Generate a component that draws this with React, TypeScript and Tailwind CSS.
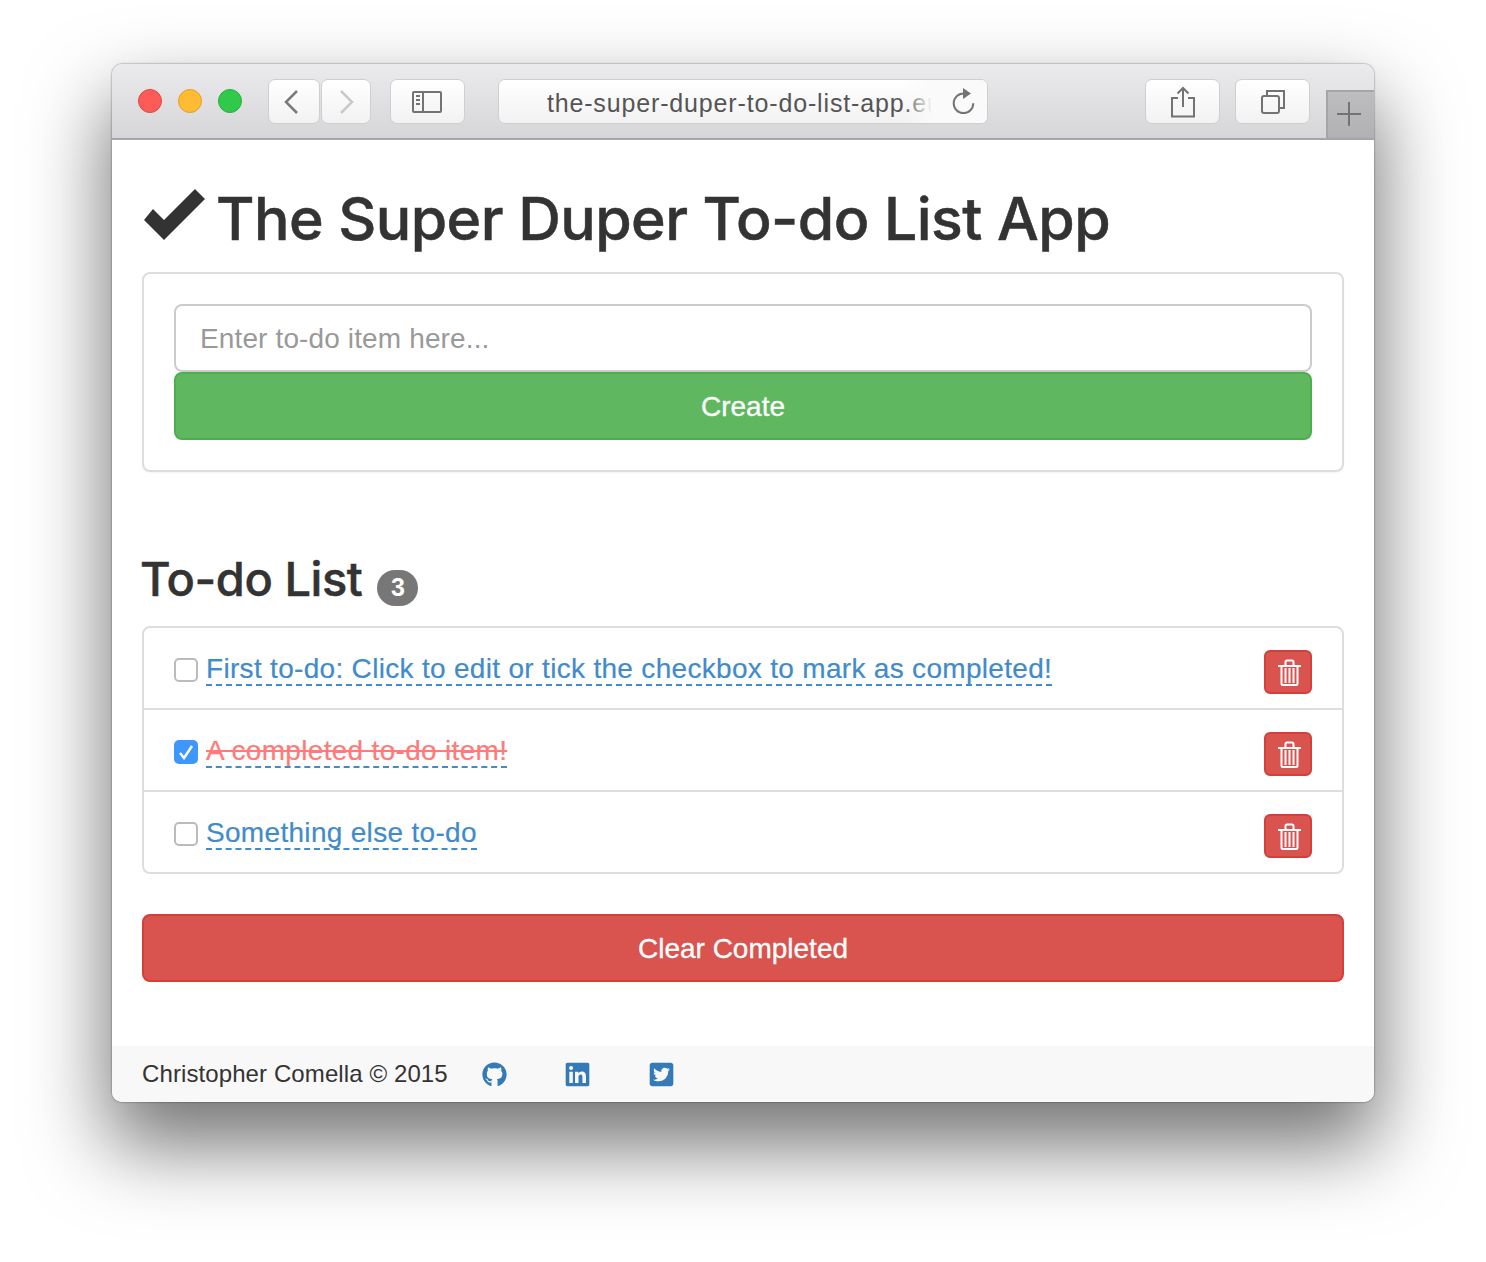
import React from 'react';
import { FaGithub, FaLinkedin, FaTwitterSquare } from 'react-icons/fa';

const todos = [
  { id: 1, text: 'First to-do: Click to edit or tick the checkbox to mark as completed!', done: false },
  { id: 2, text: 'A completed to-do item!', done: true },
  { id: 3, text: 'Something else to-do', done: false },
];

const ToolButton: React.FC<{ className: string; children?: React.ReactNode }> = ({ className, children }) => (
  <div className={`h-[45px] flex items-center justify-center rounded-[7px] border border-[#cfcfd1] bg-gradient-to-b from-white to-[#f2f2f2] ${className}`}>
    {children}
  </div>
);

const TrashIcon = () => (
  <svg width="23" height="27" viewBox="0 0 23 27" fill="none" stroke="#fff" className="ml-[2px]">
    <path d="M0 7h23" strokeWidth="2" />
    <path d="M7.500 6V3Q7.500 1.500 9 1.500h5Q15.500 1.500 15.500 3V6" strokeWidth="2" />
    <path d="M3.500 7v17.500Q3.500 26 5 26h13q1.500 0 1.500-1.500V7" strokeWidth="2" />
    <path d="M7.500 9v15M11.500 9v15M15.500 9v15" strokeWidth="2" />
  </svg>
);

const App: React.FC = () => {
  return (
    <div className="w-[1486px] h-[1262px] bg-white overflow-hidden pt-[64px] pl-[112px] font-['Liberation_Sans',Arial,sans-serif] text-[#333]">
      <div className="w-[1262px] h-[1038px] rounded-[10px] bg-white overflow-hidden shadow-[0_40px_80px_4px_rgba(0,0,0,0.55),0_0_2px_rgba(0,0,0,0.6)] flex flex-col">
        {/* Safari toolbar */}
        <div className="h-[76px] shrink-0 flex border-b-2 border-[#a5a4a6] bg-gradient-to-b from-[#ebeaec] to-[#d6d5d8] pl-[26px]">
          <div className="flex gap-[16px] mt-[25px] h-[24px]">
            <div className="size-[24px] rounded-full bg-[#fc5b57] border border-[#e2463f]" />
            <div className="size-[24px] rounded-full bg-[#ffbb33] border border-[#e2a028]" />
            <div className="size-[24px] rounded-full bg-[#30c94a] border border-[#2aae3e]" />
          </div>
          <div className="flex ml-[26px] mt-[15px]">
            <ToolButton className="w-[52px]">
              <svg width="16" height="26" viewBox="0 0 16 26" fill="none" stroke="#7b7b7b" strokeWidth="2.500" className="-ml-[6px]"><path d="M14 2 3 13l11 11" /></svg>
            </ToolButton>
            <ToolButton className="w-[50px] ml-[1px]">
              <svg width="16" height="26" viewBox="0 0 16 26" fill="none" stroke="#c9c9c9" strokeWidth="2.500" className="ml-[2px]"><path d="m2 2 11 11L2 24" /></svg>
            </ToolButton>
          </div>
          <ToolButton className="w-[75px] ml-[19px] mt-[15px]">
            <svg width="30" height="24" viewBox="0 0 30 24" fill="none" stroke="#737373" strokeWidth="2"><rect x="1" y="2" width="28" height="20" rx="1" /><path d="M11 2v20M4 6h4M4 10h4M4 14h4" /></svg>
          </ToolButton>
          <ToolButton className="w-[491px] ml-[33px] mt-[15px] relative justify-start overflow-hidden">
            <span className="pl-[48px] pt-[2px] text-[25px] leading-[32px] tracking-[0.85px] text-[#555] whitespace-nowrap">the-super-duper-to-do-list-app.eu</span>
            <div className="absolute right-0 top-0 bottom-0 w-[84px] bg-gradient-to-r from-transparent to-[#fafafa] to-[35%]" />
            <svg className="absolute right-[11px] top-[7px]" width="26" height="28" viewBox="0 0 26 28" fill="none">
              <path d="M13.500 6.500a9.800 9.800 0 1 0 9.800 9.800" stroke="#737373" strokeWidth="2" />
              <path d="M13 1l8 5.500-8 5.500z" fill="#737373" />
            </svg>
          </ToolButton>
          <ToolButton className="w-[75px] ml-[157px] mt-[15px]">
            <svg width="26" height="32" viewBox="0 0 26 32" fill="none" stroke="#737373" strokeWidth="2"><path d="M8 12H2v18.500h22V12h-6M13 21V2M7.500 7.500 13 2l5.500 5.500" /></svg>
          </ToolButton>
          <ToolButton className="w-[75px] ml-[15px] mt-[15px]">
            <svg width="26" height="26" viewBox="0 0 26 26" fill="none" stroke="#737373" strokeWidth="2"><rect x="2" y="7" width="17" height="17" rx="2" /><path d="M7 6V2h17v17h-4" /></svg>
          </ToolButton>
          <div className="w-[48px] h-[48px] ml-[16px] mt-[26px] shrink-0 flex items-start bg-gradient-to-b from-[#bdbcbe] to-[#b1b0b2] border-l-2 border-t-2 border-[#a5a4a6]">
            <svg width="24" height="24" viewBox="0 0 24 24" stroke="#737373" strokeWidth="2" className="ml-[9px] mt-[10px]"><path d="M0 12h24M12 0v24" /></svg>
          </div>
        </div>

        {/* Page */}
        <div className="flex-1 flex flex-col px-[30px]">
          <h1 className="mt-[46px] mb-[20px] h-[66px] font-['Inter',sans-serif] text-[59px] leading-[66px] font-medium tracking-[-0.55px] [-webkit-text-stroke:0.5px_#333] flex items-center gap-[10px] whitespace-nowrap">
            <svg width="62" height="52" viewBox="0 0 62 52" fill="#333" className="shrink-0 ml-[2px] -mt-[8px]"><path d="M0 31 9 20l11 11L51 0l10 10-41 41z" /></svg>
            The Super Duper To-do List App
          </h1>

          <div className="h-[200px] rounded-[8px] border-2 border-[#ddd] p-[30px] shadow-[0_1px_2px_rgba(0,0,0,0.05)]">
            <input
              placeholder="Enter to-do item here..."
              className="w-full h-[68px] px-[24px] pt-[2px] rounded-[8px] border-2 border-[#ccc] text-[28px] tracking-[0.13px] outline-none placeholder:text-[#999]"
            />
            <button className="w-full h-[68px] pt-[2px] rounded-[8px] border-2 border-[#4cae4c] bg-[#5fb860] text-[28px] text-white [-webkit-text-stroke:0.3px_#fff]">Create</button>
          </div>

          <h3 className="mt-[80px] mb-[20px] h-[54px] -ml-[2px] font-['Inter',sans-serif] text-[47px] leading-[53px] font-medium tracking-[-0.45px] [-webkit-text-stroke:0.5px_#333] flex items-start">
            To-do List
            <span className="ml-[15px] mt-[18px] h-[36px] w-[41px] rounded-full bg-[#777] text-white font-['Liberation_Sans',sans-serif] text-[25px] leading-[34px] tracking-normal font-bold text-center [-webkit-text-stroke:0px]">3</span>
          </h3>

          <ul className="rounded-[8px] border-2 border-[#ddd] divide-y-2 divide-[#ddd]">
            {todos.map(todo => (
              <li key={todo.id} className="h-[82px] last:h-[80px] flex items-start pl-[30px] pr-[30px]">
                {todo.done ? (
                  <div className="mt-[30px] size-[24px] rounded-[5px] bg-[#3e97fb] flex items-center justify-center">
                    <svg width="16" height="16" viewBox="0 0 16 16" fill="none" stroke="#fff" strokeWidth="2.500"><path d="m2 9 4 5 8-12" /></svg>
                  </div>
                ) : (
                  <div className="mt-[30px] size-[24px] rounded-[5px] border-2 border-[#bbb] bg-white" />
                )}
                <span className={`ml-[8px] mt-[26px] text-[28px] leading-[30px] tracking-[0.31px] [-webkit-text-stroke:0.2px] border-b-2 border-dashed border-[#428bca] ${todo.done ? 'text-[#ff7b7b] line-through' : 'text-[#428bca]'}`}>
                  {todo.text}
                </span>
                <button className="ml-auto mt-[22px] w-[48px] h-[44px] flex items-center justify-center rounded-[6px] border-2 border-[#d43f3a] bg-[#d9534f]">
                  <TrashIcon />
                </button>
              </li>
            ))}
          </ul>

          <button className="mt-[40px] h-[68px] pt-[2px] shrink-0 rounded-[8px] border-2 border-[#d43f3a] bg-[#d9534f] text-[28px] text-white [-webkit-text-stroke:0.3px_#fff]">Clear Completed</button>
        </div>

        <div className="h-[56px] shrink-0 bg-[#f8f8f8] flex items-center pl-[30px] text-[24px]">
          <span className="tracking-[0.1px]">Christopher Comella © 2015</span>
          <FaGithub className="ml-[34px] text-[#337ab7] size-[25px]" />
          <FaLinkedin className="ml-[57px] text-[#337ab7] size-[27px]" />
          <FaTwitterSquare className="ml-[57px] text-[#337ab7] size-[27px]" />
        </div>
      </div>
    </div>
  );
};

export default App;
